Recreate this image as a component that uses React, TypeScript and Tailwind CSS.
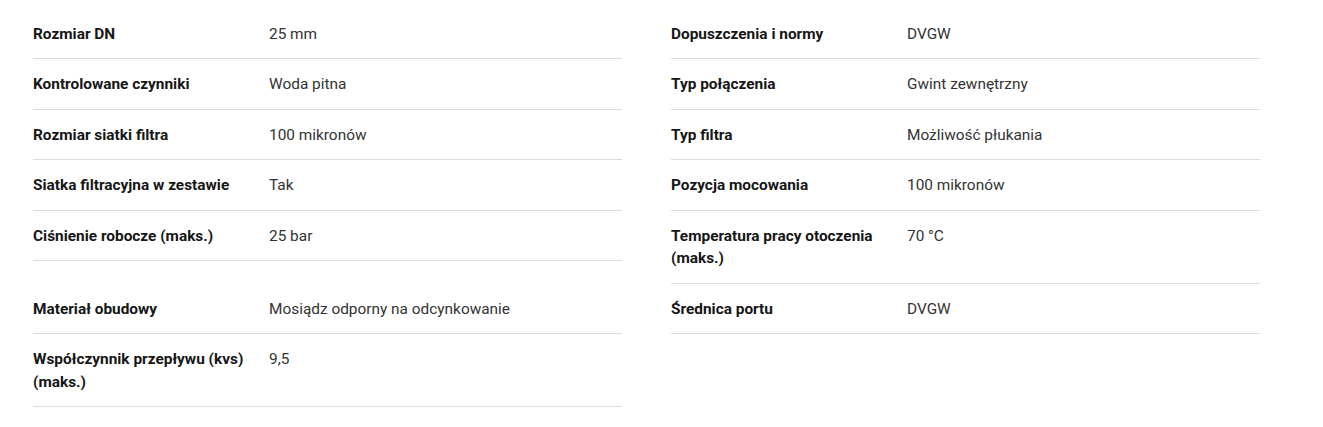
import React from 'react';

type Spec = { label: string; value: string };

const specs: (Spec | null)[][] = [
  [
    { label: 'Rozmiar DN', value: '25 mm' },
    { label: 'Dopuszczenia i normy', value: 'DVGW' },
  ],
  [
    { label: 'Kontrolowane czynniki', value: 'Woda pitna' },
    { label: 'Typ połączenia', value: 'Gwint zewnętrzny' },
  ],
  [
    { label: 'Rozmiar siatki filtra', value: '100 mikronów' },
    { label: 'Typ filtra', value: 'Możliwość płukania' },
  ],
  [
    { label: 'Siatka filtracyjna w zestawie', value: 'Tak' },
    { label: 'Pozycja mocowania', value: '100 mikronów' },
  ],
  [
    { label: 'Ciśnienie robocze (maks.)', value: '25 bar' },
    { label: 'Temperatura pracy otoczenia (maks.)', value: '70 °C' },
  ],
  [
    { label: 'Materiał obudowy', value: 'Mosiądz odporny na odcynkowanie' },
    { label: 'Średnica portu', value: 'DVGW' },
  ],
  [{ label: 'Współczynnik przepływu (kvs) (maks.)', value: '9,5' }, null],
];

function SpecRow({ spec }: { spec: Spec }) {
  return (
    <div className="flex border-b border-[#dcdcdc] pt-[14px] pb-[13px] text-[15.4px] leading-[22.5px]">
      <div className="w-[236px] shrink-0 pr-4 font-bold text-[#161616]">{spec.label}</div>
      <div className="flex-1 text-[#333333]">{spec.value}</div>
    </div>
  );
}

export default function App() {
  return (
    <div className="min-h-screen bg-white pt-[8.5px]" style={{ fontFamily: 'Roboto, "Liberation Sans", sans-serif' }}>
      <div className="ml-[33px] grid w-[1227px] grid-cols-2 items-start gap-x-[49px]">
        {specs.flat().map((spec, i) =>
          spec ? <SpecRow key={i} spec={spec} /> : <div key={i} />
        )}
      </div>
    </div>
  );
}
